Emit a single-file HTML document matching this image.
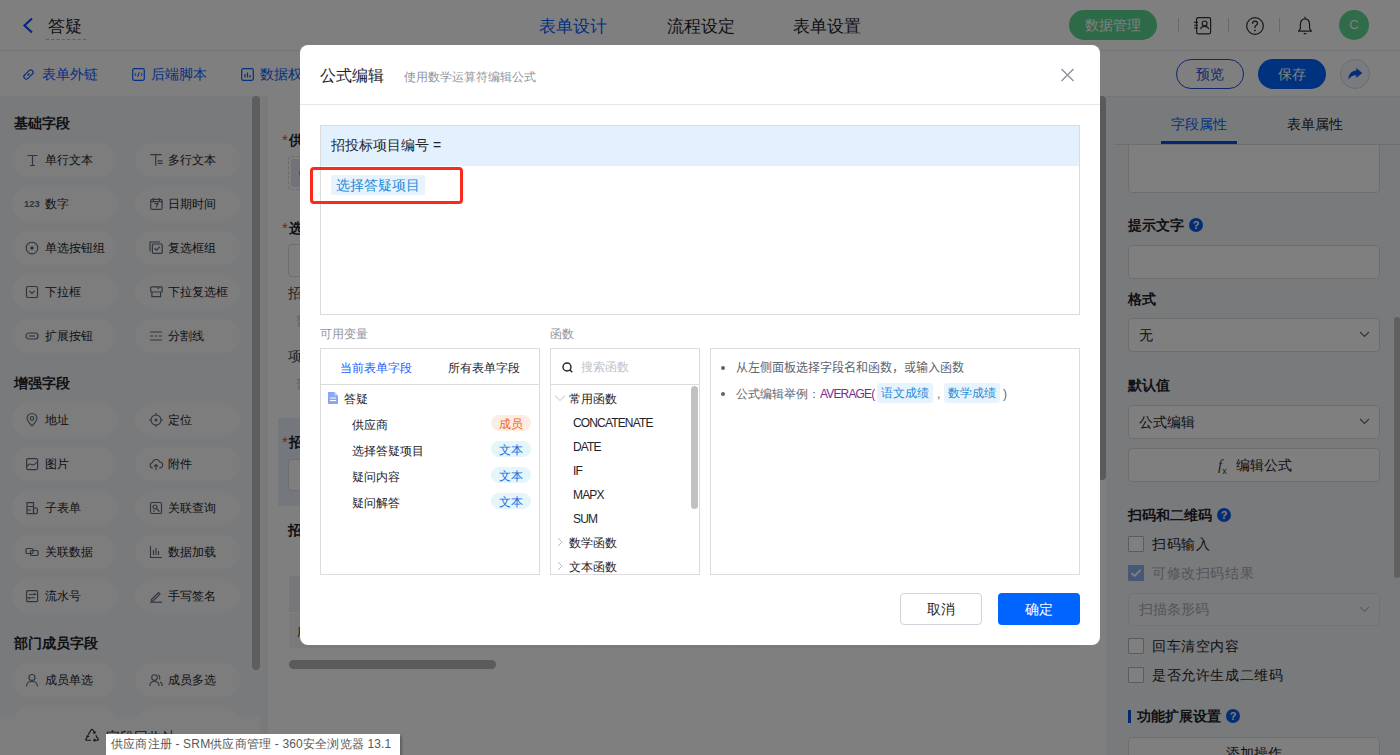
<!DOCTYPE html>
<html><head><meta charset="utf-8">
<style>
*{box-sizing:border-box;margin:0;padding:0}
html,body{width:1400px;height:755px;overflow:hidden;background:#fff;font-family:"Liberation Sans",sans-serif;color:#1f2329}
.a{position:absolute}
svg{display:block}
/* header */
#hdr{left:0;top:0;width:1400px;height:51px;background:#fff;border-bottom:1px solid #e8e9ec}
#tb{left:0;top:51px;width:1400px;height:45px;background:#fff}
.tab16{font-size:17px;line-height:20px;top:17px;color:#1f2329}
.tlink{font-size:14px;line-height:18px;top:65px;color:#0a60ff}
/* sidebar */
#side{left:0;top:96px;width:268px;height:659px;background:#f2f4f8}
.sec{font-size:14px;font-weight:bold;line-height:18px;left:14px;color:#1f2329}
.pill{width:105px;height:34px;border-radius:17px;background:#fafbfc}
.pill .ic{position:absolute;left:13px;top:10px;width:14px;height:14px;overflow:visible}
.pill.c2 .ic{left:14px}
.pill span{position:absolute;left:33px;top:9px;font-size:12px;line-height:16px;color:#1f2329;white-space:nowrap}
/* canvas */
#canvas{left:268px;top:96px;width:838px;height:659px;background:#fff}
/* right panel */
#rp{left:1106px;top:96px;width:294px;height:659px;background:#f2f4f8}
.lbl{font-size:14px;font-weight:bold;line-height:18px;color:#1f2329;left:1128px}
.inp{left:1128px;width:252px;background:#fff;border:1px solid #dcdcdc;border-radius:4px}
.q{width:14px;height:14px;border-radius:50%;background:#0a5ae6;color:#fff;font-size:11px;font-weight:bold;line-height:14px;text-align:center}
.chk{left:1128px;width:16px;height:16px;border:1px solid #b4b9c4;border-radius:1px;background:#fff}
.ctext{left:1152px;font-size:14px;letter-spacing:0.6px;line-height:18px;color:#1f2329}
#mask{left:0;top:0;width:1400px;height:755px;background:rgba(0,0,0,.5)}
/* modal */
#modal{left:300px;top:45px;width:800px;height:600px;background:#fff;border-radius:8px}
.m{position:absolute}
.fn{left:573px;font-size:12px;line-height:16px;color:#1f2329;letter-spacing:-0.85px;margin-top:1px}
</style></head><body>

<!-- HEADER -->
<div id="hdr" class="a"></div>
<svg class="a" style="left:21px;top:17px" width="14" height="17" viewBox="0 0 14 17"><path d="M11 1.5 L3.5 8.5 L11 15.5" fill="none" stroke="#0a4ff0" stroke-width="2.2"/></svg>
<div class="a" style="left:48px;top:17px;font-size:17px;line-height:20px;color:#1f2329">答疑</div>
<div class="a" style="left:46px;top:39px;width:40px;border-top:1px dashed #b9bcc4"></div>
<div class="a tab16" style="left:539px;color:#0a60ff">表单设计</div>
<div class="a tab16" style="left:667px">流程设定</div>
<div class="a tab16" style="left:793px">表单设置</div>
<div class="a" style="left:1069px;top:10px;width:88px;height:30px;border-radius:15px;background:#58d490;color:#fff;font-size:14px;line-height:30px;text-align:center">数据管理</div>
<div class="a" style="left:1178px;top:18px;width:1px;height:14px;background:#d0d3d9"></div>
<div class="a" style="left:1228px;top:18px;width:1px;height:14px;background:#d0d3d9"></div>
<div class="a" style="left:1279px;top:18px;width:1px;height:14px;background:#d0d3d9"></div>
<svg class="a" style="left:1193px;top:16px" width="19" height="19" viewBox="0 0 19 19"><rect x="3.6" y="1.6" width="14" height="16.2" rx="1.5" fill="none" stroke="#33302c" stroke-width="1.2"/><circle cx="11.6" cy="7.4" r="2.4" fill="none" stroke="#33302c" stroke-width="1.2"/><path d="M7.6 13.2 Q8 10.3 11.6 10.3 Q15.2 10.3 15.6 13.2" fill="none" stroke="#33302c" stroke-width="1.2"/><path d="M1 6.4h4M1 9.2h4M1 12h4" stroke="#33302c" stroke-width="1.1"/></svg>
<svg class="a" style="left:1245px;top:16px" width="20" height="20" viewBox="0 0 20 20"><circle cx="10" cy="10" r="8.3" fill="none" stroke="#33302c" stroke-width="1.2"/><path d="M7.5 7.8 Q7.5 5.2 10 5.2 Q12.5 5.2 12.5 7.5 Q12.5 9 10 10.3 L10 12" fill="none" stroke="#33302c" stroke-width="1.25"/><circle cx="10" cy="14.4" r="0.85" fill="#33302c"/></svg>
<svg class="a" style="left:1296px;top:15px" width="18" height="20" viewBox="0 0 18 20"><path d="M9 3.8 Q4.6 3.8 4.4 9.5 L4.4 13.6 L2.6 16.2 H15.4 L13.6 13.6 L13.6 9.5 Q13.4 3.8 9 3.8 Z" fill="none" stroke="#33302c" stroke-width="1.2" stroke-linejoin="round"/><path d="M7.6 18.7h2.8M9 1.8v1.6" stroke="#33302c" stroke-width="1.2"/></svg>
<div class="a" style="left:1339px;top:10px;width:30px;height:30px;border-radius:50%;background:#60d892;color:#fff;font-size:13px;line-height:30px;text-align:center">C</div>

<!-- TOOLBAR -->
<div id="tb" class="a"></div>
<svg class="a" style="left:22px;top:68px" width="13" height="13" viewBox="0 0 13 13"><path d="M5.5 7.5 L7.5 5.5" stroke="#0a60ff" stroke-width="1.2"/><path d="M4.8 4.8 L2.6 7 Q1 8.6 2.6 10.4 Q4.4 12 6 10.4 L8.2 8.2" fill="none" stroke="#0a60ff" stroke-width="1.2"/><path d="M8.2 8.2 L10.4 6 Q12 4.4 10.4 2.6 Q8.6 1 7 2.6 L4.8 4.8" fill="none" stroke="#0a60ff" stroke-width="1.2"/></svg>
<div class="a tlink" style="left:42px">表单外链</div>
<svg class="a" style="left:132px;top:68px" width="13" height="13" viewBox="0 0 13 13"><rect x="0.7" y="0.7" width="11.6" height="11.6" rx="1.5" fill="none" stroke="#0a60ff" stroke-width="1.2"/><path d="M4 5 L2.8 6.5 L4 8 M9 5 L10.2 6.5 L9 8 M7.2 4.2 L5.8 8.8" fill="none" stroke="#0a60ff" stroke-width="1"/></svg>
<div class="a tlink" style="left:151px">后端脚本</div>
<svg class="a" style="left:241px;top:68px" width="13" height="13" viewBox="0 0 13 13"><rect x="0.7" y="0.7" width="11.6" height="11.6" rx="1.5" fill="none" stroke="#0a60ff" stroke-width="1.2"/><path d="M4 6v3.5M6.5 4.5v5M9 7v2.5" stroke="#0a60ff" stroke-width="1.2"/></svg>
<div class="a tlink" style="left:260px">数据权限</div>
<div class="a" style="left:1176px;top:59px;width:68px;height:30px;border:1px solid #1a4fd6;border-radius:15px;color:#1a4fd6;font-size:14px;line-height:28px;text-align:center">预览</div>
<div class="a" style="left:1258px;top:59px;width:68px;height:30px;border-radius:15px;background:#0064ff;color:#fff;font-size:14px;line-height:30px;text-align:center">保存</div>
<div class="a" style="left:1340px;top:59px;width:30px;height:30px;border-radius:50%;background:#f3f6fd;border:1px solid #cfd8ee"></div>
<svg class="a" style="left:1347px;top:66px" width="16" height="16" viewBox="0 0 16 16"><path d="M9.3 1.9 L15.3 7 L9.3 12.1 L9.3 9.3 Q4.2 9.3 1.3 13.6 Q1.6 4.8 9.3 4.5 Z" fill="#0a5af0"/></svg>

<!-- SIDEBAR -->
<div id="side" class="a"></div>
<div class="a sec" style="top:114px">基础字段</div>
<div class="a sec" style="top:374px">增强字段</div>
<div class="a sec" style="top:634px">部门成员字段</div>
<div class="a pill" style="left:12px;top:143px"><svg class="ic" width="14" height="14" viewBox="0 0 14 14"><path d="M2.5 2.5h10M7.5 2.5v10M5 12.5h5" stroke="#626b7d" stroke-width="1.2" fill="none"/></svg><span>单行文本</span></div>
<div class="a pill c2" style="left:135px;top:143px"><svg class="ic" width="14" height="14" viewBox="0 0 14 14"><path d="M1.2 1.7h11.4M6.7 1.7v11M8.6 7.8h5M8.6 10.4h5" stroke="#626b7d" stroke-width="1.2" fill="none"/></svg><span>多行文本</span></div>
<div class="a pill" style="left:12px;top:187px"><svg class="ic" width="14" height="14" viewBox="0 0 14 14"><text x="-1" y="9.8" font-size="9.4" font-weight="bold" font-family="Liberation Sans" fill="#626b7d">123</text></svg><span>数字</span></div>
<div class="a pill c2" style="left:135px;top:187px"><svg class="ic" width="14" height="14" viewBox="0 0 14 14"><rect x="1.7" y="2.4" width="11.4" height="10" rx="1.5" fill="none" stroke="#626b7d" stroke-width="1.2"/><path d="M4.3 1v3M10.5 1v3M1.7 4.6h11.4" stroke="#626b7d" stroke-width="1.2"/><path d="M5.6 6.6h3.4l-1.8 4" fill="none" stroke="#626b7d" stroke-width="1.1"/></svg><span>日期时间</span></div>
<div class="a pill" style="left:12px;top:231px"><svg class="ic" width="14" height="14" viewBox="0 0 14 14"><circle cx="7" cy="7" r="5.8" fill="none" stroke="#626b7d" stroke-width="1.15"/><circle cx="7" cy="7" r="1.8" fill="#626b7d"/></svg><span>单选按钮组</span></div>
<div class="a pill c2" style="left:135px;top:231px"><svg class="ic" width="14" height="14" viewBox="0 0 14 14"><rect x="3.4" y="3" width="9.8" height="9.3" rx="1" fill="none" stroke="#626b7d" stroke-width="1.2"/><path d="M1 10.5V1h10" fill="none" stroke="#626b7d" stroke-width="1.1"/><path d="M5.5 7.2l2 2 3.3-3.6" fill="none" stroke="#626b7d" stroke-width="1.2"/></svg><span>复选框组</span></div>
<div class="a pill" style="left:12px;top:275px"><svg class="ic" width="14" height="14" viewBox="0 0 14 14"><rect x="1.5" y="1.5" width="11" height="11" rx="1" fill="none" stroke="#626b7d" stroke-width="1.15"/><path d="M4.5 6l2.5 2.5 2.5-2.5" fill="none" stroke="#626b7d" stroke-width="1.15"/></svg><span>下拉框</span></div>
<div class="a pill c2" style="left:135px;top:275px"><svg class="ic" width="14" height="14" viewBox="0 0 14 14"><rect x="1.7" y="1.8" width="11.5" height="5.2" rx="1" fill="none" stroke="#626b7d" stroke-width="1.2"/><path d="M2.9 7v4.7h8.7V7" fill="none" stroke="#626b7d" stroke-width="1.2"/><path d="M7.6 2.4l1.6 1.9 1.6-1.9z" fill="#626b7d"/></svg><span>下拉复选框</span></div>
<div class="a pill" style="left:12px;top:319px"><svg class="ic" width="14" height="14" viewBox="0 0 14 14"><rect x="1" y="4" width="12" height="6" rx="3" fill="none" stroke="#626b7d" stroke-width="1.2"/><path d="M4 7h6" stroke="#626b7d" stroke-width="1.2"/></svg><span>扩展按钮</span></div>
<div class="a pill c2" style="left:135px;top:319px"><svg class="ic" width="14" height="14" viewBox="0 0 14 14"><path d="M1 3h12M1 11h12M1 7h3M5.5 7h3M10 7h3" stroke="#626b7d" stroke-width="1.15"/></svg><span>分割线</span></div>
<div class="a pill" style="left:12px;top:403px"><svg class="ic" width="14" height="14" viewBox="0 0 14 14"><path d="M7 13 Q2 7.5 2 5.5 A5 5 0 0 1 12 5.5 Q12 7.5 7 13Z" fill="none" stroke="#626b7d" stroke-width="1.15"/><circle cx="7" cy="5.5" r="1.8" fill="none" stroke="#626b7d" stroke-width="1.2"/></svg><span>地址</span></div>
<div class="a pill c2" style="left:135px;top:403px"><svg class="ic" width="14" height="14" viewBox="0 0 14 14"><circle cx="7" cy="7" r="5" fill="none" stroke="#626b7d" stroke-width="1.15"/><circle cx="7" cy="7" r="1.5" fill="#626b7d"/><path d="M7 0v2.5M7 11.5v2.5M0 7h2.5M11.5 7h2.5" stroke="#626b7d" stroke-width="1.15"/></svg><span>定位</span></div>
<div class="a pill" style="left:12px;top:447px"><svg class="ic" width="14" height="14" viewBox="0 0 14 14"><rect x="1.6" y="1.6" width="11" height="11" rx="1.5" fill="none" stroke="#626b7d" stroke-width="1.2"/><path d="M2 9.5 Q4 6 6.5 7.5 T12.5 4.5" fill="none" stroke="#626b7d" stroke-width="1.1"/></svg><span>图片</span></div>
<div class="a pill c2" style="left:135px;top:447px"><svg class="ic" width="14" height="14" viewBox="0 0 14 14"><path d="M4 11H3.5A2.8 2.8 0 0 1 3.5 5.5 A3.8 3.8 0 0 1 10.8 5 A2.8 2.8 0 0 1 10.5 11H10" fill="none" stroke="#626b7d" stroke-width="1.15"/><path d="M7 13V7.5M5 9.5l2-2 2 2" fill="none" stroke="#626b7d" stroke-width="1.15"/></svg><span>附件</span></div>
<div class="a pill" style="left:12px;top:491px"><svg class="ic" width="14" height="14" viewBox="0 0 14 14"><path d="M2 1.6h6.5v11H2z M2 5.5h6.5M2 9h4" fill="none" stroke="#626b7d" stroke-width="1.2"/><rect x="8.5" y="7" width="3.8" height="5.6" rx="0.8" fill="none" stroke="#626b7d" stroke-width="1.2"/></svg><span>子表单</span></div>
<div class="a pill c2" style="left:135px;top:491px"><svg class="ic" width="14" height="14" viewBox="0 0 14 14"><rect x="1.5" y="1.5" width="11" height="11" rx="1" fill="none" stroke="#626b7d" stroke-width="1.15"/><circle cx="6" cy="6" r="2" fill="none" stroke="#626b7d" stroke-width="1.2"/><path d="M7.5 7.5l3 3M4 10h2" stroke="#626b7d" stroke-width="1.2"/></svg><span>关联查询</span></div>
<div class="a pill" style="left:12px;top:535px"><svg class="ic" width="14" height="14" viewBox="0 0 14 14"><rect x="1" y="3.5" width="7" height="5" rx="1.2" fill="none" stroke="#626b7d" stroke-width="1.2"/><rect x="5.5" y="5.5" width="7.5" height="5" rx="1.2" fill="none" stroke="#626b7d" stroke-width="1.2"/></svg><span>关联数据</span></div>
<div class="a pill c2" style="left:135px;top:535px"><svg class="ic" width="14" height="14" viewBox="0 0 14 14"><path d="M1.5 1v11.5H13M4.5 5v5M7 3v7M9.5 6v4" stroke="#626b7d" stroke-width="1.15" fill="none"/></svg><span>数据加载</span></div>
<div class="a pill" style="left:12px;top:579px"><svg class="ic" width="14" height="14" viewBox="0 0 14 14"><rect x="1.6" y="1.6" width="11" height="11" rx="1" fill="none" stroke="#626b7d" stroke-width="1.2"/><path d="M4 5.5h6.5l-1.5-1.3M10 8.7H3.5l1.5 1.3" fill="none" stroke="#626b7d" stroke-width="1.1"/></svg><span>流水号</span></div>
<div class="a pill c2" style="left:135px;top:579px"><svg class="ic" width="14" height="14" viewBox="0 0 14 14"><path d="M2.5 10.5l7-7 1.5 1.5-7 7H2.5z" fill="none" stroke="#626b7d" stroke-width="1.2"/><path d="M1 13.2h12" stroke="#626b7d" stroke-width="1.2"/></svg><span>手写签名</span></div>
<div class="a pill" style="left:12px;top:663px"><svg class="ic" width="14" height="14" viewBox="0 0 14 14"><circle cx="7" cy="4.5" r="3" fill="none" stroke="#626b7d" stroke-width="1.15"/><path d="M1.5 13.5 Q1.5 8.5 7 8.5 Q12.5 8.5 12.5 13.5" fill="none" stroke="#626b7d" stroke-width="1.15"/></svg><span>成员单选</span></div>
<div class="a pill c2" style="left:135px;top:663px"><svg class="ic" width="14" height="14" viewBox="0 0 14 14"><circle cx="5.5" cy="4.5" r="2.8" fill="none" stroke="#626b7d" stroke-width="1.15"/><path d="M0.8 13 Q0.8 8.5 5.5 8.5 Q10 8.5 10 13M9 2 Q11.5 2.5 10.5 6.5M11 9 Q13.5 10 13.2 13" fill="none" stroke="#626b7d" stroke-width="1.15"/></svg><span>成员多选</span></div>
<div class="a pill" style="left:12px;top:707px"><svg class="ic" width="14" height="14" viewBox="0 0 14 14"><circle cx="7" cy="4.5" r="3" fill="none" stroke="#626b7d" stroke-width="1.15"/><path d="M1.5 13.5 Q1.5 8.5 7 8.5 Q12.5 8.5 12.5 13.5" fill="none" stroke="#626b7d" stroke-width="1.15"/></svg><span>部门单选</span></div>
<div class="a pill c2" style="left:135px;top:707px"><svg class="ic" width="14" height="14" viewBox="0 0 14 14"><circle cx="5.5" cy="4.5" r="2.8" fill="none" stroke="#626b7d" stroke-width="1.15"/><path d="M0.8 13 Q0.8 8.5 5.5 8.5 Q10 8.5 10 13M9 2 Q11.5 2.5 10.5 6.5M11 9 Q13.5 10 13.2 13" fill="none" stroke="#626b7d" stroke-width="1.15"/></svg><span>部门多选</span></div>
<div class="a" style="left:0;top:717px;width:260px;height:38px;background:#fafbfc"></div>
<svg class="a" style="left:85px;top:728px" width="15" height="14" viewBox="0 0 15 14"><path d="M3.2 6.8 L6.2 1.8 Q7 0.8 7.8 1.8 L9.6 4.8 M10.8 7.2 L13.2 11.2 Q13.6 12.2 12.5 12.2 L9 12.2 M6 12.2 L1.5 12.2 Q0.4 12.2 1 11 L2.8 8 M8.2 4.9 L9.9 5.2 L10.3 3.5 M10.2 11 L8.8 12.2 L10.2 13.4 M1.5 8.6 L2.9 7.7 L4 9" fill="none" stroke="#1f2329" stroke-width="1.15"/></svg>
<div class="a" style="left:106px;top:728px;font-size:14px;line-height:18px;color:#1f2329">字段回收站</div>
<div class="a" style="left:252px;top:96px;width:8px;height:574px;border-radius:4px;background:#bcbcbc"></div>

<!-- CANVAS -->
<div id="canvas" class="a"></div>

<!-- canvas content -->
<div class="a" style="left:282px;top:131px;font-size:14px;line-height:18px;font-weight:bold;color:#1f2329;white-space:nowrap"><span style="color:#e8483c;font-weight:normal;font-size:15px;display:inline-block;width:7px;vertical-align:top;margin-top:0px">*</span>供应商</div>
<div class="a" style="left:288px;top:156px;width:790px;height:34px;border:1px dashed #d6d8dd;border-radius:4px"></div>
<div class="a" style="left:291px;top:159px;width:90px;height:28px;border-radius:2px;background:#ebe3f2"></div>
<div class="a" style="left:299px;top:168px;width:10px;height:10px;border-radius:50%;background:#4cb87a"></div>
<div class="a" style="left:282px;top:219px;font-size:14px;line-height:18px;font-weight:bold;color:#1f2329;white-space:nowrap"><span style="color:#e8483c;font-weight:normal;font-size:15px;display:inline-block;width:7px;vertical-align:top;margin-top:0px">*</span>选择答疑项目</div>
<div class="a" style="left:288px;top:244px;width:790px;height:33px;border:1px solid #dcdcdc;border-radius:4px"></div>
<div class="a" style="left:288px;top:284px;font-size:14px;line-height:18px;color:#3a3f47;white-space:nowrap">招投标项目编号</div>
<div class="a" style="left:296px;top:313px;font-size:12px;line-height:16px;color:#c0c4cc">暂无内容</div>
<div class="a" style="left:288px;top:347px;font-size:14px;line-height:18px;color:#3a3f47;white-space:nowrap">项目名称</div>
<div class="a" style="left:296px;top:376px;font-size:12px;line-height:16px;color:#c0c4cc">暂无内容</div>
<div class="a" style="left:278px;top:418px;width:810px;height:88px;background:#e9eef9"></div>
<div class="a" style="left:282px;top:433px;font-size:14px;line-height:18px;font-weight:bold;color:#1f2329;white-space:nowrap"><span style="color:#e8483c;font-weight:normal;font-size:15px;display:inline-block;width:7px;vertical-align:top;margin-top:0px">*</span>招投标项目编号</div>
<div class="a" style="left:288px;top:459px;width:790px;height:32px;border:1px solid #dcdcdc;border-radius:4px;background:#fff"></div>
<div class="a" style="left:288px;top:521px;font-size:14px;line-height:18px;font-weight:bold;color:#1f2329;white-space:nowrap">招投标项目明细</div>
<div class="a" style="left:289px;top:576px;width:790px;height:36px;background:#eeeff2"></div>
<div class="a" style="left:289px;top:612px;width:790px;height:36px;background:#f5f5f6;border-top:1px solid #fff"></div>
<div class="a" style="left:435px;top:576px;width:1px;height:72px;background:#fff"></div><div class="a" style="left:583px;top:576px;width:1px;height:72px;background:#fff"></div><div class="a" style="left:731px;top:576px;width:1px;height:72px;background:#fff"></div><div class="a" style="left:880px;top:576px;width:1px;height:72px;background:#fff"></div><div class="a" style="left:1030px;top:576px;width:1px;height:72px;background:#fff"></div>
<div class="a" style="left:297px;top:624px;font-size:12px;line-height:16px;color:#1f2329">序号</div>
<div class="a" style="left:289px;top:660px;width:207px;height:9px;border-radius:5px;background:#b6b6b6"></div>

<div class="a" style="left:1098px;top:96px;width:8px;height:384px;border-radius:4px;background:#b4b4b4"></div>

<!-- RIGHT PANEL -->
<div id="rp" class="a"></div>

<!-- right panel content -->
<div class="a" style="left:1106px;top:96px;width:294px;height:1px;background:#e9ebef"></div>
<div class="a" style="left:1171px;top:115px;font-size:14px;line-height:18px;color:#0064ff">字段属性</div>
<div class="a" style="left:1287px;top:115px;font-size:14px;line-height:18px;color:#1f2329">表单属性</div>
<div class="a" style="left:1114px;top:144px;width:286px;height:1px;background:#dcdcdc"></div>
<div class="a" style="left:1161px;top:141px;width:76px;height:3px;background:#0a4fe0"></div>
<div class="a" style="left:1106px;top:145px;width:294px;height:610px;overflow:hidden">
  <div class="a" style="left:22px;top:-20px;width:252px;height:68px;background:#fff;border:1px solid #dcdcdc;border-radius:4px"></div>
</div>
<div class="a lbl" style="top:216px">提示文字</div>
<div class="a q" style="left:1189px;top:218px">?</div>
<div class="a inp" style="top:245px;height:34px"></div>
<div class="a lbl" style="top:290px">格式</div>
<div class="a inp" style="top:318px;height:34px"></div>
<div class="a" style="left:1139px;top:326px;font-size:14px;line-height:18px;color:#1f2329">无</div>
<svg class="a chev" style="left:1359px;top:331px" width="11" height="7" viewBox="0 0 11 7"><path d="M1 1 L5.5 5.5 L10 1" fill="none" stroke="#5f6672" stroke-width="1.2"/></svg>
<div class="a lbl" style="top:376px">默认值</div>
<div class="a inp" style="top:405px;height:34px"></div>
<div class="a" style="left:1139px;top:413px;font-size:14px;line-height:18px;color:#1f2329">公式编辑</div>
<svg class="a" style="left:1359px;top:418px" width="11" height="7" viewBox="0 0 11 7"><path d="M1 1 L5.5 5.5 L10 1" fill="none" stroke="#5f6672" stroke-width="1.2"/></svg>
<div class="a inp" style="top:448px;height:34px"></div>
<div class="a" style="left:1218px;top:455px;font-size:15px;line-height:20px;font-style:italic;font-family:'Liberation Serif',serif;color:#3a3f47">f<sub style="font-size:9px;font-style:normal;font-family:'Liberation Sans',sans-serif">x</sub></div>
<div class="a" style="left:1236px;top:456px;font-size:14px;line-height:18px;color:#1f2329">编辑公式</div>
<div class="a lbl" style="top:506px">扫码和二维码</div>
<div class="a q" style="left:1217px;top:508px">?</div>
<div class="a chk" style="top:536px"></div>
<div class="a ctext" style="top:535px">扫码输入</div>
<div class="a chk" style="top:565px;background:#8ab0f0;border-color:#8ab0f0"></div>
<svg class="a" style="left:1130px;top:568px" width="12" height="10" viewBox="0 0 12 10"><path d="M1.5 5 L4.5 8 L10.5 2" fill="none" stroke="#fff" stroke-width="1.8"/></svg>
<div class="a ctext" style="top:564px;color:#a8abb2">可修改扫码结果</div>
<div class="a inp" style="top:593px;height:33px;background:#f5f6f8;border-color:#e4e6eb"></div>
<div class="a" style="left:1139px;top:600px;font-size:14px;line-height:18px;color:#a8abb2">扫描条形码</div>
<svg class="a" style="left:1359px;top:606px" width="11" height="7" viewBox="0 0 11 7"><path d="M1 1 L5.5 5.5 L10 1" fill="none" stroke="#b8bcc4" stroke-width="1.2"/></svg>
<div class="a chk" style="top:638px"></div>
<div class="a ctext" style="top:637px">回车清空内容</div>
<div class="a chk" style="top:667px"></div>
<div class="a ctext" style="top:666px">是否允许生成二维码</div>
<div class="a" style="left:1128px;top:710px;width:3px;height:13px;background:#0a4fe0"></div>
<div class="a lbl" style="left:1137px;top:707px">功能扩展设置</div>
<div class="a q" style="left:1226px;top:709px">?</div>
<div class="a inp" style="top:737px;height:34px"></div>
<div class="a" style="left:1226px;top:744px;font-size:14px;line-height:18px;color:#1f2329">添加操作</div>
<div class="a" style="left:1394px;top:317px;width:6px;height:261px;border-radius:3px;background:#c1c1c1"></div>


<div id="mask" class="a"></div>

<!-- MODAL -->
<div id="modal" class="a"></div>

<!-- modal header -->
<div class="a" style="left:320px;top:66px;font-size:16px;line-height:20px;color:#1f2329">公式编辑</div>
<div class="a" style="left:404px;top:69px;font-size:12px;line-height:16px;color:#8f959e">使用数学运算符编辑公式</div>
<svg class="a" style="left:1060px;top:68px" width="15" height="14" viewBox="0 0 15 14"><path d="M1.5 1 L13.5 13 M13.5 1 L1.5 13" stroke="#8a8f99" stroke-width="1.3"/></svg>
<div class="a" style="left:300px;top:104px;width:800px;height:1px;background:#e5e6eb"></div>
<!-- editor -->
<div class="a" style="left:320px;top:125px;width:760px;height:190px;border:1px solid #dcdcdc;background:#fff"></div>
<div class="a" style="left:321px;top:126px;width:758px;height:40px;background:#e3f1fe"></div>
<div class="a" style="left:331px;top:136px;font-size:14px;line-height:18px;color:#1f2329">招投标项目编号 =</div>
<div class="a" style="left:331px;top:175px;width:94px;height:20px;background:#e8f4fd;border-radius:2px"></div>
<div class="a" style="left:336px;top:176px;font-size:14px;line-height:18px;color:#1f8ad8">选择答疑项目</div>
<div class="a" style="left:310px;top:167px;width:153px;height:37px;border:3px solid #fb2a1e;border-radius:4px"></div>
<!-- labels -->
<div class="a" style="left:320px;top:326px;font-size:12px;line-height:16px;color:#8f959e">可用变量</div>
<div class="a" style="left:550px;top:326px;font-size:12px;line-height:16px;color:#8f959e">函数</div>
<!-- variables panel -->
<div class="a" style="left:320px;top:348px;width:220px;height:227px;border:1px solid #dcdcdc"></div>
<div class="a" style="left:321px;top:384px;width:218px;height:1px;background:#dcdcdc"></div>
<div class="a" style="left:340px;top:360px;font-size:12px;line-height:16px;color:#1a5cff">当前表单字段</div>
<div class="a" style="left:448px;top:360px;font-size:12px;line-height:16px;color:#1f2329">所有表单字段</div>
<svg class="a" style="left:328px;top:392px" width="10" height="12" viewBox="0 0 10 12"><path d="M0 0H6.5L10 3.5V12H0Z" fill="#8aa6f5"/><path d="M2 6h6M2 8.5h6" stroke="#fff" stroke-width="1"/><path d="M6.5 0V3.5H10" fill="#c5d4fa"/></svg>
<div class="a" style="left:344px;top:391px;font-size:12px;line-height:16px;color:#1f2329">答疑</div>
<div class="a" style="left:352px;top:417px;font-size:12px;line-height:16px;color:#1f2329">供应商</div>
<div class="a" style="left:352px;top:443px;font-size:12px;line-height:16px;color:#1f2329">选择答疑项目</div>
<div class="a" style="left:352px;top:469px;font-size:12px;line-height:16px;color:#1f2329">疑问内容</div>
<div class="a" style="left:352px;top:495px;font-size:12px;line-height:16px;color:#1f2329">疑问解答</div>
<div class="a" style="left:491px;top:415px;width:40px;height:16px;border-radius:8px;background:#fdece3;color:#ee6a22;font-size:12px;line-height:18px;text-align:center">成员</div>
<div class="a" style="left:491px;top:441px;width:40px;height:16px;border-radius:8px;background:#e5f6fa;color:#1a6ce0;font-size:12px;line-height:18px;text-align:center">文本</div>
<div class="a" style="left:491px;top:467px;width:40px;height:16px;border-radius:8px;background:#e5f6fa;color:#1a6ce0;font-size:12px;line-height:18px;text-align:center">文本</div>
<div class="a" style="left:491px;top:493px;width:40px;height:16px;border-radius:8px;background:#e5f6fa;color:#1a6ce0;font-size:12px;line-height:18px;text-align:center">文本</div>
<!-- functions panel -->
<div class="a" style="left:550px;top:348px;width:150px;height:227px;border:1px solid #dcdcdc"></div>
<div class="a" style="left:551px;top:384px;width:148px;height:1px;background:#dcdcdc"></div>
<svg class="a" style="left:562px;top:362px" width="11" height="11" viewBox="0 0 11 11"><circle cx="5" cy="5" r="4" fill="none" stroke="#1f2329" stroke-width="1.4"/><path d="M7.8 7.8 L10.2 10.2" stroke="#1f2329" stroke-width="1.5"/></svg>
<div class="a" style="left:581px;top:359px;font-size:12px;line-height:16px;color:#c0c4cc">搜索函数</div>
<svg class="a" style="left:554px;top:394px" width="12" height="8" viewBox="0 0 12 8"><path d="M1 1.5 L6 6.5 L11 1.5" fill="none" stroke="#b8bcc4" stroke-width="1"/></svg>
<div class="a" style="left:569px;top:391px;font-size:12px;line-height:16px;color:#1f2329">常用函数</div>
<div class="a fn" style="top:414px">CONCATENATE</div>
<div class="a fn" style="top:438px">DATE</div>
<div class="a fn" style="top:462px">IF</div>
<div class="a fn" style="top:486px">MAPX</div>
<div class="a fn" style="top:510px">SUM</div>
<svg class="a" style="left:557px;top:537px" width="6" height="10" viewBox="0 0 6 10"><path d="M1 1 L5 5 L1 9" fill="none" stroke="#b8bcc4" stroke-width="1"/></svg>
<div class="a" style="left:569px;top:535px;font-size:12px;line-height:16px;color:#1f2329">数学函数</div>
<svg class="a" style="left:557px;top:561px" width="6" height="10" viewBox="0 0 6 10"><path d="M1 1 L5 5 L1 9" fill="none" stroke="#b8bcc4" stroke-width="1"/></svg>
<div class="a" style="left:569px;top:559px;font-size:12px;line-height:16px;color:#1f2329">文本函数</div>
<div class="a" style="left:691px;top:386px;width:7px;height:123px;border-radius:4px;background:#c1c1c1"></div>
<!-- help panel -->
<div class="a" style="left:710px;top:348px;width:370px;height:227px;border:1px solid #dcdcdc"></div>
<div class="a" style="left:721px;top:366px;width:4px;height:4px;border-radius:50%;background:#5f6672"></div>
<div class="a" lang="zh-CN" style="left:736px;top:360px;font-size:12px;line-height:16px;color:#5f6672">从左侧面板选择字段名和函数，或输入函数</div>
<div class="a" style="left:721px;top:392px;width:4px;height:4px;border-radius:50%;background:#5f6672"></div>
<div class="a" lang="zh-CN" style="left:736px;top:386px;font-size:12px;line-height:16px;color:#5f6672;white-space:nowrap">公式编辑举例：<span style="color:#7a2a92;letter-spacing:-0.85px">AVERAGE(</span></div>
<div class="a" style="left:877px;top:383px;width:56px;height:20px;border-radius:3px;background:#e8f4fd;color:#1f8ad8;font-size:12px;line-height:21px;text-align:center">语文成绩</div>
<div class="a" style="left:937px;top:386px;font-size:12px;line-height:16px;color:#5f6672">,</div>
<div class="a" style="left:944px;top:383px;width:56px;height:20px;border-radius:3px;background:#e8f4fd;color:#1f8ad8;font-size:12px;line-height:21px;text-align:center">数学成绩</div>
<div class="a" style="left:1003px;top:386px;font-size:12px;line-height:16px;color:#5f6672">)</div>
<!-- buttons -->
<div class="a" style="left:900px;top:593px;width:82px;height:32px;border:1px solid #d0d3d9;border-radius:4px;background:#fff;color:#1f2329;font-size:14px;line-height:30px;text-align:center">取消</div>
<div class="a" style="left:998px;top:593px;width:82px;height:32px;border-radius:4px;background:#0064ff;color:#fff;font-size:14px;line-height:32px;text-align:center;font-weight:500">确定</div>



<!-- tooltip -->
<div class="a" style="left:106px;top:734px;width:294px;height:24px;background:#fff;box-shadow:2px 2px 2px rgba(0,0,0,.25);font-size:12px;line-height:18px;color:#575757;padding-left:5px;padding-top:1px;letter-spacing:0.18px;white-space:nowrap">供应商注册 - SRM供应商管理 - 360安全浏览器 13.1</div>
</body></html>
